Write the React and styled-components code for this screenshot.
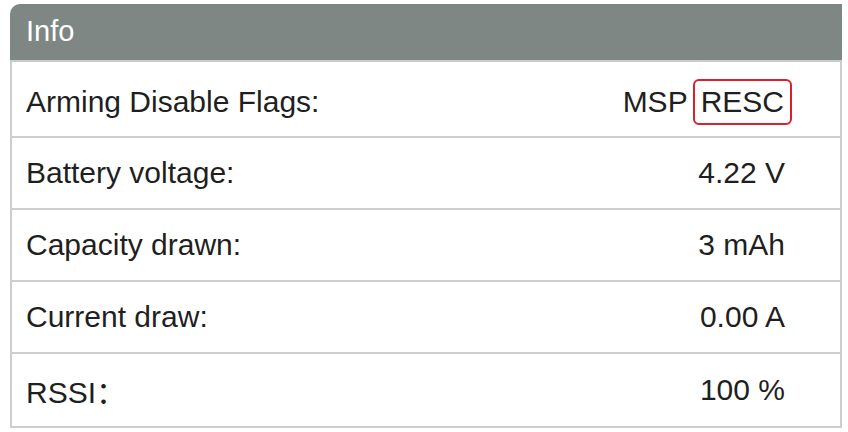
import React from 'react'
import styled, { createGlobalStyle } from 'styled-components'

const GlobalStyle = createGlobalStyle`
  body {
    margin: 0;
    background: #ffffff;
    font-family: "Liberation Sans", Arial, "Noto Sans CJK SC", sans-serif;
  }
`

const Page = styled.div`
  padding: 4px 0 0 10px;
`

const Panel = styled.div`
  width: 832px;
  box-sizing: border-box;
  border-top-left-radius: 10px;
  overflow: hidden;
`

const Header = styled.div`
  height: 58px;
  box-sizing: border-box;
  background: #7e8784;
  border-bottom: 2px solid #c9cccb;
  display: flex;
  align-items: center;
  padding: 0 0 2px 16px;
  color: #ffffff;
  font-size: 29px;
`

const Body = styled.div`
  border: 2px solid #cdcdcd;
  border-top: none;
`

const Row = styled.div`
  display: flex;
  align-items: center;
  justify-content: space-between;
  box-sizing: border-box;
  height: ${(p) => (p.$tall ? '76px' : '72px')};
  padding: ${(p) => (p.$tall ? '6px 55px 0 14px' : '0 55px 0 14px')};
  border-bottom: 2px solid #cdcdcd;
  font-size: 30px;
  color: #1f1f1f;

  &:last-child {
    border-bottom: none;
  }
`

const Label = styled.span``

const Value = styled.span`
  display: flex;
  align-items: center;
  gap: 3px;
`

const Flag = styled.span`
  display: inline-block;
  border: 2px solid ${(p) => (p.$active ? '#d9202c' : 'transparent')};
  border-radius: 6px;
  padding: ${(p) => (p.$active ? '2px 6px' : '2px 0')};
  line-height: 38px;
  margin-right: ${(p) => (p.$last ? '-7px' : '0')};
`

const rows = [
  { label: 'Battery voltage:', value: '4.22 V' },
  { label: 'Capacity drawn:', value: '3 mAh' },
  { label: 'Current draw:', value: '0.00 A' },
  { label: 'RSSI：', value: '100 %' },
]

const flags = [
  { name: 'MSP', active: false },
  { name: 'RESC', active: true },
]

export default function App() {
  return (
    <Page>
      <GlobalStyle />
      <Panel>
        <Header>Info</Header>
        <Body>
          <Row $tall>
            <Label>Arming Disable Flags:</Label>
            <Value>
              {flags.map((f, i) => (
                <Flag key={f.name} $active={f.active} $last={i === flags.length - 1}>
                  {f.name}
                </Flag>
              ))}
            </Value>
          </Row>
          {rows.map((r) => (
            <Row key={r.label}>
              <Label>{r.label}</Label>
              <Value>{r.value}</Value>
            </Row>
          ))}
        </Body>
      </Panel>
    </Page>
  )
}
